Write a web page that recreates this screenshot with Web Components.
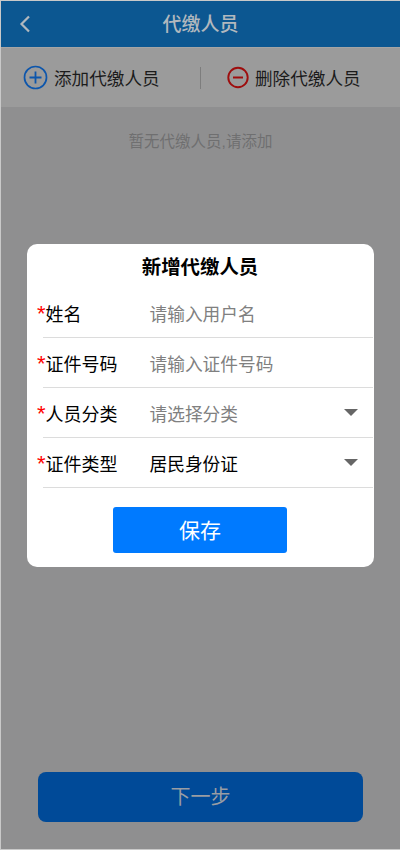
<!DOCTYPE html>
<html lang="zh">
<head>
<meta charset="utf-8">
<title>代缴人员</title>
<style>
  html, body { margin: 0; height: 100%; background: #8f8f90; }
  body { font-family: "Liberation Sans", "Noto Sans CJK SC", sans-serif; }
</style>
</head>
<body>
<payer-page>
  <payer-header slot="header">代缴人员</payer-header>
  <payer-toolbar slot="toolbar"></payer-toolbar>
  <span slot="empty">暂无代缴人员,请添加</span>
  <span slot="next">下一步</span>
  <payer-dialog slot="dialog" heading="新增代缴人员">
    <form-row label="姓名" placeholder="请输入用户名"></form-row>
    <form-row label="证件号码" placeholder="请输入证件号码"></form-row>
    <form-row label="人员分类" placeholder="请选择分类" select></form-row>
    <form-row label="证件类型" value="居民身份证" select></form-row>
  </payer-dialog>
</payer-page>

<script>
class PayerPage extends HTMLElement {
  constructor() {
    super();
    this.attachShadow({ mode: "open" }).innerHTML = `
      <style>
        :host { display: block; position: relative; width: 400px; height: 850px; overflow: hidden; }
        .screen { display: flex; flex-direction: column; height: 100%; box-sizing: border-box; padding: 1px 0 1px 1px; background: #c9c9c9; }
        .body { flex: 1; display: flex; flex-direction: column; background: #8f8f90; }
        .empty { margin-top: 24px; text-align: center; font-size: 15.5px; line-height: 22px; color: #6f6f70; }
        .next {
          margin: auto 37px 27px; height: 50px; border-radius: 8px; background: #004a98;
          display: flex; align-items: center; justify-content: center; box-sizing: border-box; padding-bottom: 3px;
          font-size: 20px; color: #9a9da3;
        }
        .overlay { position: absolute; inset: 0; display: flex; justify-content: center; align-items: flex-start; padding-top: 244px; }
      </style>
      <div class="screen">
        <slot name="header"></slot>
        <slot name="toolbar"></slot>
        <div class="body">
          <div class="empty"><slot name="empty"></slot></div>
          <div class="next"><slot name="next"></slot></div>
        </div>
      </div>
      <div class="overlay"><slot name="dialog"></slot></div>`;
  }
}

class PayerHeader extends HTMLElement {
  constructor() {
    super();
    this.attachShadow({ mode: "open" }).innerHTML = `
      <style>
        :host { display: block; }
        .bar {
          position: relative; height: 47px; box-sizing: border-box; padding-bottom: 4px;
          background: #0c5791; color: #b1b8be;
          display: flex; align-items: center; justify-content: center;
          font-size: 19px; font-weight: 500; border-bottom: 1px solid #a5a5a5;
        }
        svg { position: absolute; left: 15px; top: 14px; }
      </style>
      <div class="bar">
        <svg width="16" height="20" viewBox="0 0 16 20"><path d="M13 1.5 5.5 9l7.5 7.5" fill="none" stroke="#b1b8be" stroke-width="2.2"/></svg>
        <slot></slot>
      </div>`;
  }
}

class PayerToolbar extends HTMLElement {
  constructor() {
    super();
    this.attachShadow({ mode: "open" }).innerHTML = `
      <style>
        :host { display: block; }
        .bar { height: 59px; background: #9b9b9b; display: flex; align-items: center; color: #1b1b1b; font-size: 17.6px; }
        .item { display: flex; align-items: center; gap: 6px; white-space: nowrap; }
        .add { width: 199px; box-sizing: border-box; padding-left: 22px; }
        .del { flex: 1; padding-left: 26px; }
        .sep { width: 1px; height: 22px; background: #7d7d7d; }
      </style>
      <div class="bar">
        <div class="item add">
          <svg width="25" height="25" viewBox="0 0 25 25"><circle cx="12.5" cy="12.5" r="11" fill="none" stroke="#0d56ac" stroke-width="1.7"/><path d="M12.5 6.5v12M6.5 12.5h12" stroke="#0d56ac" stroke-width="1.8"/></svg>
          <span>添加代缴人员</span>
        </div>
        <div class="sep"></div>
        <div class="item del">
          <svg width="22" height="23" viewBox="0 0 22 23"><circle cx="11" cy="11.5" r="9.7" fill="none" stroke="#9e0d0d" stroke-width="1.9"/><path d="M6 11.5h10" stroke="#9e0d0d" stroke-width="2"/></svg>
          <span>删除代缴人员</span>
        </div>
      </div>`;
  }
}

class PayerDialog extends HTMLElement {
  constructor() {
    super();
    this.attachShadow({ mode: "open" }).innerHTML = `
      <style>
        :host { display: block; width: 347px; height: 323px; background: #fff; border-radius: 10px; }
        h2 { margin: 0; height: 44px; padding-bottom: 2px; box-sizing: border-box; display: flex; align-items: center; justify-content: center; font-size: 19.4px; font-weight: 700; color: #000; }
        .save {
          display: flex; align-items: center; justify-content: center;
          width: 174px; height: 46px; margin: 19px auto 0; border-radius: 3px; box-sizing: border-box; padding-bottom: 3px;
          background: #007aff; color: #fff; font-size: 21px;
        }
      </style>
      <h2></h2>
      <slot></slot>
      <div class="save">保存</div>`;
    this.shadowRoot.querySelector("h2").textContent = this.getAttribute("heading");
  }
}

class FormRow extends HTMLElement {
  constructor() {
    super();
    const value = this.getAttribute("value");
    this.attachShadow({ mode: "open" }).innerHTML = `
      <style>
        :host { display: block; }
        .row { position: relative; height: 50px; margin: 0 1px 0 16px; border-bottom: 1px solid #dcdcdc; box-sizing: border-box; display: flex; align-items: center; font-size: 17.7px; color: #000; }
        .star { position: absolute; left: -5.5px; top: 15px; color: #f00; font-size: 22px; line-height: 22px; }
        .label { width: 107px; padding-left: 3px; box-sizing: border-box; font-size: 18px; }
        .value { flex: 1; color: ${value ? "#000" : "#808080"}; }
        .arrow { width: 0; height: 0; margin-right: 15px; border: 7px solid transparent; border-top: 7px solid #666; border-bottom: 0; }
      </style>
      <div class="row">
        <span class="star">*</span>
        <span class="label"></span>
        <span class="value"></span>
        ${this.hasAttribute("select") ? '<span class="arrow"></span>' : ""}
      </div>`;
    this.shadowRoot.querySelector(".label").textContent = this.getAttribute("label");
    this.shadowRoot.querySelector(".value").textContent = value || this.getAttribute("placeholder");
  }
}

customElements.define("payer-page", PayerPage);
customElements.define("payer-header", PayerHeader);
customElements.define("payer-toolbar", PayerToolbar);
customElements.define("payer-dialog", PayerDialog);
customElements.define("form-row", FormRow);
</script>
</body>
</html>
